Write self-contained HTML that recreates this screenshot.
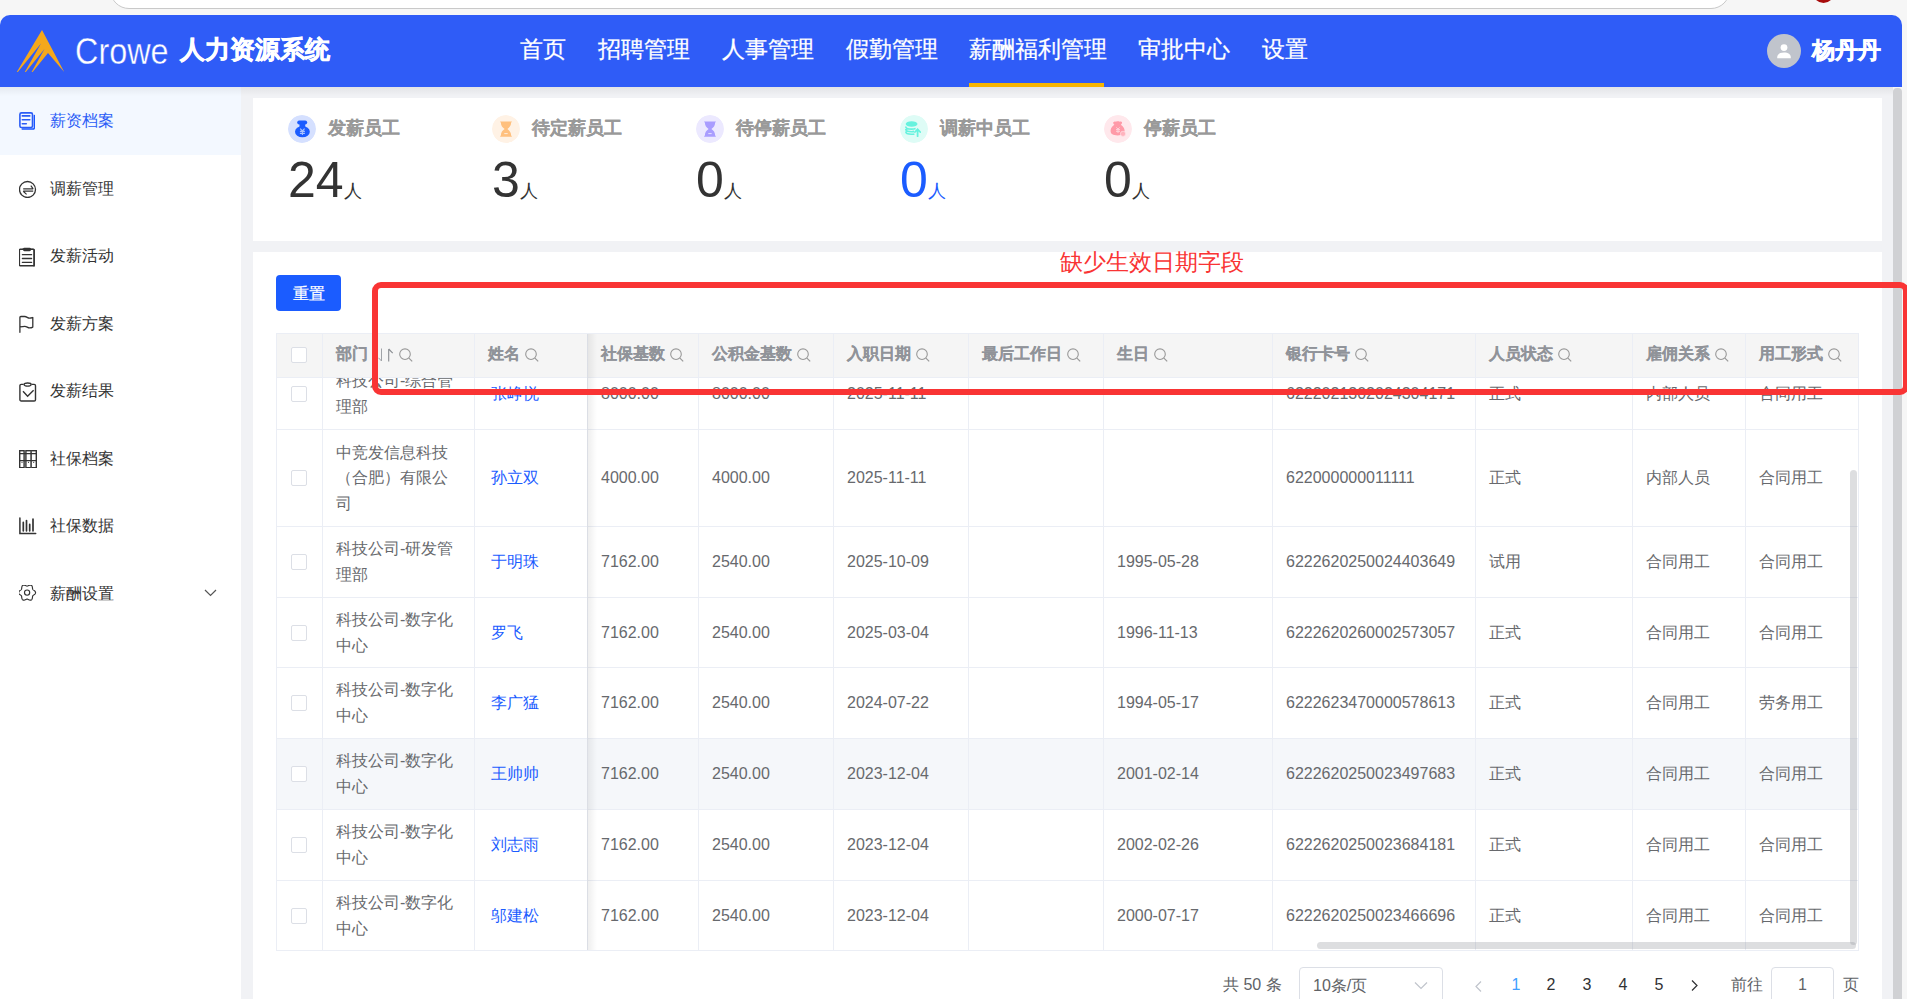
<!DOCTYPE html>
<html><head><meta charset="utf-8">
<style>
*{box-sizing:border-box;margin:0;padding:0}
html,body{width:1907px;height:999px;overflow:hidden;background:#f6f6f6;font-family:"Liberation Sans",sans-serif}
.abs{position:absolute}
#root{position:relative;width:1907px;height:999px;overflow:hidden}
#search{position:absolute;left:110px;top:-30px;width:1620px;height:39px;background:#fff;border:1.5px solid #c9c9c9;border-radius:19px}
#redav{position:absolute;left:1813px;top:-17px;width:21px;height:20px;border-radius:50%;background:#a80c0c}
#hdr{position:absolute;left:0;top:15px;width:1902px;height:72px;background:#2f5cf7;border-radius:10px 10px 0 0}
#hdr .nav{position:absolute;top:-1px;height:72px;line-height:70px;color:#fff;font-size:22.7px;white-space:nowrap;-webkit-text-stroke:0.25px #fff}
#hdr .act{position:absolute;left:969px;top:68px;width:135px;height:4px;background:#f7b500}
#side{position:absolute;left:0;top:87px;width:241px;height:912px;background:#fff}
#content{position:absolute;left:241px;top:87px;width:1652px;height:912px;background:#f1f2f5}
#shadow{position:absolute;left:0;top:87px;width:1893px;height:9px;background:linear-gradient(rgba(0,0,0,0.06),rgba(0,0,0,0))}
#vscroll{position:absolute;left:1893px;top:88px;width:9px;height:911px;background:#d0d1d4;border-radius:4px 4px 0 0}
.mi{position:absolute;left:0;width:241px;height:68px;color:#333;font-size:16px}
.mi span{position:absolute;left:50px;top:0;line-height:68px}
.mi svg{position:absolute;left:19px;top:25px}
.card{position:absolute;background:#fff}
.st{position:absolute;top:98px;height:143px}
.st .ic{position:absolute;left:0;top:16.5px;width:28px;height:28px;border-radius:50%}
.st .lb{position:absolute;left:40px;top:16px;line-height:28px;font-size:18px;font-weight:bold;color:#999;white-space:nowrap;-webkit-text-stroke:0.15px #999}
.st .num{position:absolute;left:0;top:52px;font-size:50px;line-height:60px;color:#333;white-space:nowrap}
.st .num small{font-size:18px;margin-left:0px}

</style></head><body><div id="root">
<div id="search"></div>
<div id="redav"></div>
<div id="hdr">
  <svg class="abs" style="left:0;top:0" width="70" height="72" viewBox="0 15 70 72"><path d="M42 30 L64.2 72 L48 53 L32.6 72 L31.6 72 L44.5 48.9 L25.8 72 L24.8 72 L41 43.4 L17.8 72 L16.8 72 Z" fill="#f5a81c"/></svg>
  <div class="nav" style="left:75px;top:1px;font-size:37px;font-weight:normal;line-height:72px;transform:scaleX(0.875);transform-origin:0 0;-webkit-text-stroke:0.4px #2f5cf7">Crowe</div>
  <div class="nav" style="left:180px;font-size:25px;font-weight:bold;-webkit-text-stroke:0.6px #fff">人力资源系统</div>
  <div class="nav" style="left:520px">首页</div>
  <div class="nav" style="left:598px">招聘管理</div>
  <div class="nav" style="left:722px">人事管理</div>
  <div class="nav" style="left:846px">假勤管理</div>
  <div class="nav" style="left:969px">薪酬福利管理</div>
  <div class="nav" style="left:1138px">审批中心</div>
  <div class="nav" style="left:1262px">设置</div>
  <div class="act"></div>
  <svg class="abs" style="left:1767px;top:19px" width="34" height="34" viewBox="0 0 34 34"><circle cx="17" cy="17" r="17" fill="#c0c4cc"/><circle cx="17" cy="13.6" r="3.4" fill="#fff"/><path d="M10.2 23.6c0-3.2 2.6-5 6.8-5s6.8 1.8 6.8 5v.6H10.2z" fill="#fff"/></svg>
  <div class="nav" style="left:1812px;top:0px;font-weight:bold;-webkit-text-stroke:0.6px #fff">杨丹丹</div>
</div>
<div id="side"></div>
<div id="content"></div>
<div class="mi" style="top:87px;background:#f3f8ff;color:#2a5cf6"><svg width="16" height="18" viewBox="0 0 16 18"><rect x="0.9" y="0.9" width="12.6" height="14.6" rx="1.6" fill="none" stroke="#2a5cf6" stroke-width="1.6"/><path d="M3.3 3.9h7.5M3.3 7.8h7.5M3.3 11.7h4" stroke="#2a5cf6" stroke-width="1.6" stroke-linecap="round"/><path d="M15.4 3.6v12.2a1.2 1.2 0 0 1-1.2 1.2H3.2" fill="none" stroke="#1a55ff" stroke-width="1.5" stroke-linecap="round"/></svg><span>薪资档案</span></div>
<div class="mi" style="top:155px"><svg width="18" height="18" viewBox="0 0 18 18"><circle cx="8.5" cy="9.5" r="8" fill="none" stroke="#333" stroke-width="1.3"/><path d="M4.2 8.9h10M4.2 11.2h10M11.8 5.6l2.4 3.2M4.2 11.2l3.4 3.2" fill="none" stroke="#333" stroke-width="1.2"/></svg><span>调薪管理</span></div>
<div class="mi" style="top:222px"><svg width="18" height="20" viewBox="0 0 18 20"><path d="M3 2.4h3.4M10.5 2.4h3.6a1 1 0 0 1 1 1v16" fill="none" stroke="#333" stroke-width="1.4"/><rect x="0.4" y="2.2" width="14.8" height="16.6" rx="0.8" fill="none" stroke="#333" stroke-width="1.4"/><rect x="4.6" y="1.4" width="6.8" height="2.2" rx="0.8" fill="none" stroke="#333" stroke-width="1.2"/><path d="M3.4 7.7h9.2M3.4 11.5h9.2M3.4 15.4h9.2" stroke="#333" stroke-width="1.3" stroke-linecap="round"/></svg><span>发薪活动</span></div>
<div class="mi" style="top:290px"><svg width="18" height="18" viewBox="0 0 18 18"><path d="M0.9 17.3V2.5a1 1 0 0 1 1-1h3.8c2.2 0 2.8 1.6 4.9 1.6 1.5 0 2.5-.4 3.2-.6v9.6c-.7.4-1.7.8-3.2.8-2.1 0-2.7-1.6-4.9-1.6-1.4 0-3.1.3-4.8.6" fill="none" stroke="#333" stroke-width="1.3" stroke-linejoin="round" stroke-linecap="round"/></svg><span>发薪方案</span></div>
<div class="mi" style="top:357px"><svg width="18" height="20" viewBox="0 0 18 20"><path d="M4.6 2.4H2.2A1.3 1.3 0 0 0 .9 3.7v14a1.3 1.3 0 0 0 1.3 1.3h13a1.3 1.3 0 0 0 1.3-1.3v-14a1.3 1.3 0 0 0-1.3-1.3h-2.5" fill="none" stroke="#333" stroke-width="1.4"/><ellipse cx="8.6" cy="2.6" rx="3.6" ry="1.6" fill="none" stroke="#333" stroke-width="1.3"/><path d="M4 9.3l4.6 5 6-6" fill="none" stroke="#333" stroke-width="1.4"/></svg><span>发薪结果</span></div>
<div class="mi" style="top:425px"><svg width="18" height="18" viewBox="0 0 18 18"><rect x="0.7" y="0.7" width="4.4" height="17" fill="none" stroke="#333" stroke-width="1.4"/><rect x="6.9" y="0.7" width="10.4" height="17" fill="none" stroke="#333" stroke-width="1.4"/><path d="M12.1 0.7v17" stroke="#555" stroke-width="1.8"/><path d="M0.7 3.6h16.6M0.7 10.6h16.6" stroke="#333" stroke-width="1.3"/><circle cx="3" cy="12.3" r=".6" fill="#333"/><circle cx="9.5" cy="12.3" r=".6" fill="#333"/><circle cx="14.7" cy="12.3" r=".6" fill="#333"/></svg><span>社保档案</span></div>
<div class="mi" style="top:492px"><svg width="18" height="18" viewBox="0 0 18 18"><path d="M.9 1v15.6h15.8" fill="none" stroke="#333" stroke-width="1.5" stroke-linecap="round"/><path d="M4.3 5.4v8.4M7.5 3.6v10.2M10.7 7.4v6.4M14 2.2v11.6" stroke="#333" stroke-width="1.7" stroke-linecap="round"/></svg><span>社保数据</span></div>
<div class="mi" style="top:560px"><svg width="18" height="18" viewBox="0 0 18 18"><path d="M16.55 7.60 L16.49 8.04 L16.32 8.46 L16.06 8.86 L15.72 9.22 L15.34 9.54 L14.95 9.83 L14.58 10.09 L14.25 10.34 L13.98 10.59 L13.77 10.88 L13.63 11.19 L13.55 11.56 L13.49 11.97 L13.46 12.42 L13.40 12.90 L13.31 13.39 L13.17 13.86 L12.96 14.29 L12.68 14.65 L12.32 14.92 L11.92 15.09 L11.46 15.15 L10.99 15.12 L10.51 15.01 L10.04 14.84 L9.60 14.65 L9.19 14.46 L8.80 14.29 L8.45 14.19 L8.10 14.15 L7.75 14.19 L7.40 14.29 L7.01 14.46 L6.60 14.65 L6.16 14.84 L5.69 15.01 L5.21 15.12 L4.74 15.15 L4.28 15.09 L3.88 14.92 L3.52 14.65 L3.24 14.29 L3.03 13.86 L2.89 13.39 L2.80 12.90 L2.74 12.42 L2.71 11.97 L2.65 11.56 L2.57 11.19 L2.43 10.88 L2.22 10.59 L1.95 10.34 L1.62 10.09 L1.25 9.83 L0.86 9.54 L0.48 9.22 L0.14 8.86 L-0.12 8.46 L-0.29 8.04 L-0.35 7.60 L-0.29 7.16 L-0.12 6.74 L0.14 6.34 L0.48 5.98 L0.86 5.66 L1.25 5.37 L1.62 5.11 L1.95 4.86 L2.22 4.61 L2.43 4.33 L2.57 4.01 L2.65 3.64 L2.71 3.23 L2.74 2.78 L2.80 2.30 L2.89 1.81 L3.03 1.34 L3.24 0.91 L3.52 0.55 L3.87 0.28 L4.28 0.11 L4.74 0.05 L5.21 0.08 L5.69 0.19 L6.16 0.36 L6.60 0.55 L7.01 0.74 L7.40 0.91 L7.75 1.01 L8.10 1.05 L8.45 1.01 L8.80 0.91 L9.19 0.74 L9.60 0.55 L10.04 0.36 L10.51 0.19 L10.99 0.08 L11.46 0.05 L11.92 0.11 L12.32 0.28 L12.68 0.55 L12.96 0.91 L13.17 1.34 L13.31 1.81 L13.40 2.30 L13.46 2.78 L13.49 3.23 L13.55 3.64 L13.63 4.01 L13.77 4.33 L13.98 4.61 L14.25 4.86 L14.58 5.11 L14.95 5.37 L15.34 5.66 L15.72 5.98 L16.06 6.34 L16.32 6.74 L16.49 7.16Z" fill="none" stroke="#333" stroke-width="1.15"/><circle cx="8.1" cy="7.6" r="2.6" fill="none" stroke="#333" stroke-width="1.15"/></svg><span>薪酬设置</span><svg style="left:204px;top:29px" width="13" height="8" viewBox="0 0 13 8"><path d="M1 1l5.5 5.5L12 1" fill="none" stroke="#555" stroke-width="1.2"/></svg></div>

<div id="shadow"></div>
<div id="vscroll"></div>
<div class="card" style="left:253px;top:98px;width:1629px;height:143px"></div>

<div class="st" style="left:288px"><svg class="ic" width="28" height="28" viewBox="0 0 28 28"><circle cx="14" cy="14" r="14" fill="#d5e0ff"/><rect x="9.2" y="5.5" width="10" height="3.9" rx="1.95" fill="#1b5cff"/><rect x="11.5" y="8.5" width="5.7" height="3.5" fill="#1b5cff"/><ellipse cx="14.4" cy="16.7" rx="7.4" ry="5.6" fill="#1b5cff"/><path d="M12.2 13.6l2.2 2.3 2.2-2.3M11.9 16.4h5M11.9 18.4h5M14.4 15.9v4" stroke="#a9c2ff" stroke-width="1.1" fill="none"/></svg><div class="lb">发薪员工</div><div class="num">24<small>人</small></div></div>
<div class="st" style="left:492px"><svg class="ic" width="28" height="28" viewBox="0 0 28 28"><circle cx="14" cy="14" r="14" fill="#fff2e5"/><path d="M8 6.4h12l-.9 1.4c0 3-1.6 4.6-3.7 6.2 2.1 1.6 3.7 3.2 3.7 6.2l.9 1.6H8l.9-1.6c0-3 1.6-4.6 3.7-6.2-2.1-1.6-3.7-3.2-3.7-6.2z" fill="#ffc07e"/><path d="M12.3 18.6h3.4" stroke="#fff2e5" stroke-width=".9"/></svg><div class="lb">待定薪员工</div><div class="num">3<small>人</small></div></div>
<div class="st" style="left:696px"><svg class="ic" width="28" height="28" viewBox="0 0 28 28"><circle cx="14" cy="14" r="14" fill="#ece9ff"/><path d="M8 6.4h12l-.9 1.4c0 3-1.6 4.6-3.7 6.2 2.1 1.6 3.7 3.2 3.7 6.2l.9 1.6H8l.9-1.6c0-3 1.6-4.6 3.7-6.2-2.1-1.6-3.7-3.2-3.7-6.2z" fill="#a99dff"/><path d="M12.3 18.6h3.4" stroke="#ece9ff" stroke-width=".9"/></svg><div class="lb">待停薪员工</div><div class="num">0<small>人</small></div></div>
<div class="st" style="left:900px"><svg class="ic" width="28" height="28" viewBox="0 0 28 28"><circle cx="14" cy="14" r="14" fill="#defcf6"/><ellipse cx="11.6" cy="9" rx="5.9" ry="2.8" fill="#66f2de"/><path d="M5.7 11.4c0 1.5 2.6 2.7 5.9 2.7 1.6 0 3-.3 4-.7M5.7 14c0 1.5 2.6 2.7 5.9 2.7.9 0 1.8-.1 2.6-.3M5.7 16.6c0 1.5 2.6 2.7 5.9 2.7 1 0 2-.1 2.8-.4" stroke="#66f2de" stroke-width="1.6" fill="none"/><path d="M17.6 21.2v-5.6M15 17l2.6-2.8 2.6 2.8" stroke="#66f2de" stroke-width="1.8" fill="none" stroke-linecap="round"/></svg><div class="lb">调薪中员工</div><div class="num" style="color:#1b5cff">0<small>人</small></div></div>
<div class="st" style="left:1104px"><svg class="ic" width="28" height="28" viewBox="0 0 28 28"><circle cx="14" cy="14" r="14" fill="#ffe8ec"/><path d="M9.6 7.2c.3-1 1.6-.9 2.4-.5.8-.6 2.8-.6 3.6 0 .8-.4 2.1-.5 2.4.5.3.9-.4 1.7-1.2 2.5 2.4 1.4 3.8 3.6 3.8 6.1 0 3.4-2.4 4.6-7 4.6s-7-1.2-7-4.6c0-2.5 1.4-4.7 3.8-6.1-.8-.8-1.5-1.6-1.2-2.5z" fill="#ff9aa8"/><path d="M12.4 12.4l1.6 1.7 1.6-1.7M12 14.6h4M12 16.3h4M14 14.1v4" stroke="#ffd3da" stroke-width="1" fill="none"/><circle cx="19" cy="18.8" r="2.6" fill="#ffb3be" stroke="#ffe8ec" stroke-width="0.6"/></svg><div class="lb">停薪员工</div><div class="num">0<small>人</small></div></div>
<div class="card" style="left:253px;top:252px;width:1629px;height:747px"></div>
<!--T0-->
<style>.tb{position:absolute;left:276px;top:333px;width:1583px;height:618px;border:1px solid #ebeef5;overflow:hidden;background:#fff}.th{position:absolute;top:0;height:44px;background:#f5f5f5;border-right:1px solid #ebeef5;border-bottom:1px solid #ebeef5}.th span{position:absolute;left:13px;top:-2px;line-height:44px;font-size:16px;font-weight:bold;color:#909399;white-space:nowrap;-webkit-text-stroke:0.15px #909399}.th .si{position:relative;top:2.5px;margin-left:5px}.th .so{position:relative;top:2.5px;margin-left:10px}.td{position:absolute;border-right:1px solid #ebeef5;border-top:1px solid #ebeef5;font-size:16px;color:#67696d;display:flex;align-items:center}.td span{padding-left:13px;line-height:25.6px;display:block}.cb{position:absolute;left:14px;width:16px;height:16px;border:1px solid #dcdfe6;border-radius:2px;background:#fff}</style>
<div class="tb">
<div class="td" style="left:0px;top:24px;width:46px;height:71px;background:#fff"><div class="cb" style="top:27px"></div></div>
<div class="td" style="left:46px;top:24px;width:152px;height:71px;background:#fff"><span style="width:152px;padding-right:12px">科技公司-综合管理部</span></div>
<div class="td" style="left:198px;top:24px;width:113px;height:71px;background:#fff"><span style="color:#1b5cff;padding-left:16px">张峥悦</span></div>
<div class="td" style="left:311px;top:24px;width:111px;height:71px;background:#fff"><span>8000.00</span></div>
<div class="td" style="left:422px;top:24px;width:135px;height:71px;background:#fff"><span>8000.00</span></div>
<div class="td" style="left:557px;top:24px;width:135px;height:71px;background:#fff"><span>2025-11-11</span></div>
<div class="td" style="left:692px;top:24px;width:135px;height:71px;background:#fff"><span></span></div>
<div class="td" style="left:827px;top:24px;width:169px;height:71px;background:#fff"><span></span></div>
<div class="td" style="left:996px;top:24px;width:203px;height:71px;background:#fff"><span>6222021302024304171</span></div>
<div class="td" style="left:1199px;top:24px;width:157px;height:71px;background:#fff"><span>正式</span></div>
<div class="td" style="left:1356px;top:24px;width:113px;height:71px;background:#fff"><span>内部人员</span></div>
<div class="td" style="left:1469px;top:24px;width:113px;height:71px;background:#fff"><span>合同用工</span></div>
<div class="td" style="left:0px;top:95px;width:46px;height:97px;background:#fff"><div class="cb" style="top:40px"></div></div>
<div class="td" style="left:46px;top:95px;width:152px;height:97px;background:#fff"><span style="width:152px;padding-right:12px">中竞发信息科技（合肥）有限公司</span></div>
<div class="td" style="left:198px;top:95px;width:113px;height:97px;background:#fff"><span style="color:#1b5cff;padding-left:16px">孙立双</span></div>
<div class="td" style="left:311px;top:95px;width:111px;height:97px;background:#fff"><span>4000.00</span></div>
<div class="td" style="left:422px;top:95px;width:135px;height:97px;background:#fff"><span>4000.00</span></div>
<div class="td" style="left:557px;top:95px;width:135px;height:97px;background:#fff"><span>2025-11-11</span></div>
<div class="td" style="left:692px;top:95px;width:135px;height:97px;background:#fff"><span></span></div>
<div class="td" style="left:827px;top:95px;width:169px;height:97px;background:#fff"><span></span></div>
<div class="td" style="left:996px;top:95px;width:203px;height:97px;background:#fff"><span>622000000011111</span></div>
<div class="td" style="left:1199px;top:95px;width:157px;height:97px;background:#fff"><span>正式</span></div>
<div class="td" style="left:1356px;top:95px;width:113px;height:97px;background:#fff"><span>内部人员</span></div>
<div class="td" style="left:1469px;top:95px;width:113px;height:97px;background:#fff"><span>合同用工</span></div>
<div class="td" style="left:0px;top:192px;width:46px;height:71px;background:#fff"><div class="cb" style="top:27px"></div></div>
<div class="td" style="left:46px;top:192px;width:152px;height:71px;background:#fff"><span style="width:152px;padding-right:12px">科技公司-研发管理部</span></div>
<div class="td" style="left:198px;top:192px;width:113px;height:71px;background:#fff"><span style="color:#1b5cff;padding-left:16px">于明珠</span></div>
<div class="td" style="left:311px;top:192px;width:111px;height:71px;background:#fff"><span>7162.00</span></div>
<div class="td" style="left:422px;top:192px;width:135px;height:71px;background:#fff"><span>2540.00</span></div>
<div class="td" style="left:557px;top:192px;width:135px;height:71px;background:#fff"><span>2025-10-09</span></div>
<div class="td" style="left:692px;top:192px;width:135px;height:71px;background:#fff"><span></span></div>
<div class="td" style="left:827px;top:192px;width:169px;height:71px;background:#fff"><span>1995-05-28</span></div>
<div class="td" style="left:996px;top:192px;width:203px;height:71px;background:#fff"><span>6222620250024403649</span></div>
<div class="td" style="left:1199px;top:192px;width:157px;height:71px;background:#fff"><span>试用</span></div>
<div class="td" style="left:1356px;top:192px;width:113px;height:71px;background:#fff"><span>合同用工</span></div>
<div class="td" style="left:1469px;top:192px;width:113px;height:71px;background:#fff"><span>合同用工</span></div>
<div class="td" style="left:0px;top:263px;width:46px;height:70px;background:#fff"><div class="cb" style="top:27px"></div></div>
<div class="td" style="left:46px;top:263px;width:152px;height:70px;background:#fff"><span style="width:152px;padding-right:12px">科技公司-数字化中心</span></div>
<div class="td" style="left:198px;top:263px;width:113px;height:70px;background:#fff"><span style="color:#1b5cff;padding-left:16px">罗飞</span></div>
<div class="td" style="left:311px;top:263px;width:111px;height:70px;background:#fff"><span>7162.00</span></div>
<div class="td" style="left:422px;top:263px;width:135px;height:70px;background:#fff"><span>2540.00</span></div>
<div class="td" style="left:557px;top:263px;width:135px;height:70px;background:#fff"><span>2025-03-04</span></div>
<div class="td" style="left:692px;top:263px;width:135px;height:70px;background:#fff"><span></span></div>
<div class="td" style="left:827px;top:263px;width:169px;height:70px;background:#fff"><span>1996-11-13</span></div>
<div class="td" style="left:996px;top:263px;width:203px;height:70px;background:#fff"><span>6222620260002573057</span></div>
<div class="td" style="left:1199px;top:263px;width:157px;height:70px;background:#fff"><span>正式</span></div>
<div class="td" style="left:1356px;top:263px;width:113px;height:70px;background:#fff"><span>合同用工</span></div>
<div class="td" style="left:1469px;top:263px;width:113px;height:70px;background:#fff"><span>合同用工</span></div>
<div class="td" style="left:0px;top:333px;width:46px;height:71px;background:#fff"><div class="cb" style="top:27px"></div></div>
<div class="td" style="left:46px;top:333px;width:152px;height:71px;background:#fff"><span style="width:152px;padding-right:12px">科技公司-数字化中心</span></div>
<div class="td" style="left:198px;top:333px;width:113px;height:71px;background:#fff"><span style="color:#1b5cff;padding-left:16px">李广猛</span></div>
<div class="td" style="left:311px;top:333px;width:111px;height:71px;background:#fff"><span>7162.00</span></div>
<div class="td" style="left:422px;top:333px;width:135px;height:71px;background:#fff"><span>2540.00</span></div>
<div class="td" style="left:557px;top:333px;width:135px;height:71px;background:#fff"><span>2024-07-22</span></div>
<div class="td" style="left:692px;top:333px;width:135px;height:71px;background:#fff"><span></span></div>
<div class="td" style="left:827px;top:333px;width:169px;height:71px;background:#fff"><span>1994-05-17</span></div>
<div class="td" style="left:996px;top:333px;width:203px;height:71px;background:#fff"><span>6222623470000578613</span></div>
<div class="td" style="left:1199px;top:333px;width:157px;height:71px;background:#fff"><span>正式</span></div>
<div class="td" style="left:1356px;top:333px;width:113px;height:71px;background:#fff"><span>合同用工</span></div>
<div class="td" style="left:1469px;top:333px;width:113px;height:71px;background:#fff"><span>劳务用工</span></div>
<div class="td" style="left:0px;top:404px;width:46px;height:71px;background:#f5f7fa"><div class="cb" style="top:27px"></div></div>
<div class="td" style="left:46px;top:404px;width:152px;height:71px;background:#f5f7fa"><span style="width:152px;padding-right:12px">科技公司-数字化中心</span></div>
<div class="td" style="left:198px;top:404px;width:113px;height:71px;background:#f5f7fa"><span style="color:#1b5cff;padding-left:16px">王帅帅</span></div>
<div class="td" style="left:311px;top:404px;width:111px;height:71px;background:#f5f7fa"><span>7162.00</span></div>
<div class="td" style="left:422px;top:404px;width:135px;height:71px;background:#f5f7fa"><span>2540.00</span></div>
<div class="td" style="left:557px;top:404px;width:135px;height:71px;background:#f5f7fa"><span>2023-12-04</span></div>
<div class="td" style="left:692px;top:404px;width:135px;height:71px;background:#f5f7fa"><span></span></div>
<div class="td" style="left:827px;top:404px;width:169px;height:71px;background:#f5f7fa"><span>2001-02-14</span></div>
<div class="td" style="left:996px;top:404px;width:203px;height:71px;background:#f5f7fa"><span>6222620250023497683</span></div>
<div class="td" style="left:1199px;top:404px;width:157px;height:71px;background:#f5f7fa"><span>正式</span></div>
<div class="td" style="left:1356px;top:404px;width:113px;height:71px;background:#f5f7fa"><span>合同用工</span></div>
<div class="td" style="left:1469px;top:404px;width:113px;height:71px;background:#f5f7fa"><span>合同用工</span></div>
<div class="td" style="left:0px;top:475px;width:46px;height:71px;background:#fff"><div class="cb" style="top:27px"></div></div>
<div class="td" style="left:46px;top:475px;width:152px;height:71px;background:#fff"><span style="width:152px;padding-right:12px">科技公司-数字化中心</span></div>
<div class="td" style="left:198px;top:475px;width:113px;height:71px;background:#fff"><span style="color:#1b5cff;padding-left:16px">刘志雨</span></div>
<div class="td" style="left:311px;top:475px;width:111px;height:71px;background:#fff"><span>7162.00</span></div>
<div class="td" style="left:422px;top:475px;width:135px;height:71px;background:#fff"><span>2540.00</span></div>
<div class="td" style="left:557px;top:475px;width:135px;height:71px;background:#fff"><span>2023-12-04</span></div>
<div class="td" style="left:692px;top:475px;width:135px;height:71px;background:#fff"><span></span></div>
<div class="td" style="left:827px;top:475px;width:169px;height:71px;background:#fff"><span>2002-02-26</span></div>
<div class="td" style="left:996px;top:475px;width:203px;height:71px;background:#fff"><span>6222620250023684181</span></div>
<div class="td" style="left:1199px;top:475px;width:157px;height:71px;background:#fff"><span>正式</span></div>
<div class="td" style="left:1356px;top:475px;width:113px;height:71px;background:#fff"><span>合同用工</span></div>
<div class="td" style="left:1469px;top:475px;width:113px;height:71px;background:#fff"><span>合同用工</span></div>
<div class="td" style="left:0px;top:546px;width:46px;height:70px;background:#fff"><div class="cb" style="top:27px"></div></div>
<div class="td" style="left:46px;top:546px;width:152px;height:70px;background:#fff"><span style="width:152px;padding-right:12px">科技公司-数字化中心</span></div>
<div class="td" style="left:198px;top:546px;width:113px;height:70px;background:#fff"><span style="color:#1b5cff;padding-left:16px">邬建松</span></div>
<div class="td" style="left:311px;top:546px;width:111px;height:70px;background:#fff"><span>7162.00</span></div>
<div class="td" style="left:422px;top:546px;width:135px;height:70px;background:#fff"><span>2540.00</span></div>
<div class="td" style="left:557px;top:546px;width:135px;height:70px;background:#fff"><span>2023-12-04</span></div>
<div class="td" style="left:692px;top:546px;width:135px;height:70px;background:#fff"><span></span></div>
<div class="td" style="left:827px;top:546px;width:169px;height:70px;background:#fff"><span>2000-07-17</span></div>
<div class="td" style="left:996px;top:546px;width:203px;height:70px;background:#fff"><span>6222620250023466696</span></div>
<div class="td" style="left:1199px;top:546px;width:157px;height:70px;background:#fff"><span>正式</span></div>
<div class="td" style="left:1356px;top:546px;width:113px;height:70px;background:#fff"><span>合同用工</span></div>
<div class="td" style="left:1469px;top:546px;width:113px;height:70px;background:#fff"><span>合同用工</span></div>
<div class="th" style="left:0px;width:46px"><div class="cb" style="top:13px"></div></div>
<div class="th" style="left:46px;width:152px"><span>部门<svg class="so" width="16" height="14" viewBox="0 0 16 14"><path d="M3.5 0.5v12.5M3.5 13l-3-3.2" fill="none" stroke="#a0a3a8" stroke-width="1"/><path d="M10.7 13.5V1M10.7 1l4 4.2" fill="none" stroke="#8a8d92" stroke-width="1.1"/></svg><svg class="si" width="14" height="14" viewBox="0 0 14 14"><circle cx="6" cy="6.2" r="5.3" fill="none" stroke="#999" stroke-width="1.1"/><path d="M9.9 10.1l3.3 3.3" stroke="#999" stroke-width="1.2"/></svg></span></div>
<div class="th" style="left:198px;width:113px"><span>姓名<svg class="si" width="14" height="14" viewBox="0 0 14 14"><circle cx="6" cy="6.2" r="5.3" fill="none" stroke="#999" stroke-width="1.1"/><path d="M9.9 10.1l3.3 3.3" stroke="#999" stroke-width="1.2"/></svg></span></div>
<div class="th" style="left:311px;width:111px"><span>社保基数<svg class="si" width="14" height="14" viewBox="0 0 14 14"><circle cx="6" cy="6.2" r="5.3" fill="none" stroke="#999" stroke-width="1.1"/><path d="M9.9 10.1l3.3 3.3" stroke="#999" stroke-width="1.2"/></svg></span></div>
<div class="th" style="left:422px;width:135px"><span>公积金基数<svg class="si" width="14" height="14" viewBox="0 0 14 14"><circle cx="6" cy="6.2" r="5.3" fill="none" stroke="#999" stroke-width="1.1"/><path d="M9.9 10.1l3.3 3.3" stroke="#999" stroke-width="1.2"/></svg></span></div>
<div class="th" style="left:557px;width:135px"><span>入职日期<svg class="si" width="14" height="14" viewBox="0 0 14 14"><circle cx="6" cy="6.2" r="5.3" fill="none" stroke="#999" stroke-width="1.1"/><path d="M9.9 10.1l3.3 3.3" stroke="#999" stroke-width="1.2"/></svg></span></div>
<div class="th" style="left:692px;width:135px"><span>最后工作日<svg class="si" width="14" height="14" viewBox="0 0 14 14"><circle cx="6" cy="6.2" r="5.3" fill="none" stroke="#999" stroke-width="1.1"/><path d="M9.9 10.1l3.3 3.3" stroke="#999" stroke-width="1.2"/></svg></span></div>
<div class="th" style="left:827px;width:169px"><span>生日<svg class="si" width="14" height="14" viewBox="0 0 14 14"><circle cx="6" cy="6.2" r="5.3" fill="none" stroke="#999" stroke-width="1.1"/><path d="M9.9 10.1l3.3 3.3" stroke="#999" stroke-width="1.2"/></svg></span></div>
<div class="th" style="left:996px;width:203px"><span>银行卡号<svg class="si" width="14" height="14" viewBox="0 0 14 14"><circle cx="6" cy="6.2" r="5.3" fill="none" stroke="#999" stroke-width="1.1"/><path d="M9.9 10.1l3.3 3.3" stroke="#999" stroke-width="1.2"/></svg></span></div>
<div class="th" style="left:1199px;width:157px"><span>人员状态<svg class="si" width="14" height="14" viewBox="0 0 14 14"><circle cx="6" cy="6.2" r="5.3" fill="none" stroke="#999" stroke-width="1.1"/><path d="M9.9 10.1l3.3 3.3" stroke="#999" stroke-width="1.2"/></svg></span></div>
<div class="th" style="left:1356px;width:113px"><span>雇佣关系<svg class="si" width="14" height="14" viewBox="0 0 14 14"><circle cx="6" cy="6.2" r="5.3" fill="none" stroke="#999" stroke-width="1.1"/><path d="M9.9 10.1l3.3 3.3" stroke="#999" stroke-width="1.2"/></svg></span></div>
<div class="th" style="left:1469px;width:113px"><span>用工形式<svg class="si" width="14" height="14" viewBox="0 0 14 14"><circle cx="6" cy="6.2" r="5.3" fill="none" stroke="#999" stroke-width="1.1"/><path d="M9.9 10.1l3.3 3.3" stroke="#999" stroke-width="1.2"/></svg></span></div>
<div style="position:absolute;left:310px;top:0;width:10px;height:618px;background:linear-gradient(90deg,rgba(0,0,0,0.07),rgba(0,0,0,0))"></div>
<div style="position:absolute;left:1573px;top:136px;width:7px;height:475px;border-radius:4px;background:rgba(144,147,153,0.3)"></div>
<div style="position:absolute;left:1040px;top:608px;width:539px;height:7px;border-radius:4px;background:rgba(144,147,153,0.3)"></div>
</div>
<!--T1-->

<!--X0-->
<div class="abs" style="left:276px;top:275px;width:65px;height:36px;border-radius:4px;background:#1b5cff;color:#fff;font-size:16px;line-height:38px;text-align:center;-webkit-text-stroke:0.2px #fff">重置</div>
<div class="abs" style="left:1223px;top:973px;font-size:16px;line-height:24px;color:#606266;white-space:nowrap">共 50 条</div>
<div class="abs" style="left:1299px;top:967px;width:144px;height:40px;border:1px solid #dcdfe6;border-radius:4px;background:#fff"></div>
<div class="abs" style="left:1313px;top:974px;font-size:16px;line-height:24px;color:#606266;white-space:nowrap">10条/页</div>
<svg class="abs" style="left:1414px;top:981px" width="14" height="9" viewBox="0 0 14 9"><path d="M1 1.5l6 6 6-6" fill="none" stroke="#c0c4cc" stroke-width="1.2"/></svg>
<svg class="abs" style="left:1474px;top:980px" width="9" height="13" viewBox="0 0 9 13"><path d="M7 1.5l-5 5 5 5" fill="none" stroke="#c0c4cc" stroke-width="1.2"/></svg>
<div class="abs" style="left:1501px;top:973px;width:30px;font-size:16px;line-height:24px;color:#409eff;text-align:center">1</div>
<div class="abs" style="left:1536px;top:973px;width:30px;font-size:16px;line-height:24px;color:#303133;text-align:center">2</div>
<div class="abs" style="left:1572px;top:973px;width:30px;font-size:16px;line-height:24px;color:#303133;text-align:center">3</div>
<div class="abs" style="left:1608px;top:973px;width:30px;font-size:16px;line-height:24px;color:#303133;text-align:center">4</div>
<div class="abs" style="left:1644px;top:973px;width:30px;font-size:16px;line-height:24px;color:#303133;text-align:center">5</div>
<svg class="abs" style="left:1690px;top:979px" width="9" height="13" viewBox="0 0 9 13"><path d="M2 1.5l5 5-5 5" fill="none" stroke="#303133" stroke-width="1.2"/></svg>
<div class="abs" style="left:1731px;top:973px;font-size:16px;line-height:24px;color:#606266;white-space:nowrap">前往</div>
<div class="abs" style="left:1771px;top:967px;width:63px;height:40px;border:1px solid #dcdfe6;border-radius:4px;background:#fff"></div>
<div class="abs" style="left:1771px;top:973px;width:63px;font-size:16px;line-height:24px;color:#606266;text-align:center">1</div>
<div class="abs" style="left:1843px;top:973px;font-size:16px;line-height:24px;color:#606266;white-space:nowrap">页</div>
<div class="abs" style="left:372px;top:282px;width:1537px;height:112.5px;border:6px solid #f93434;border-radius:9px"></div>
<div class="abs" style="left:1060px;top:247px;font-size:23px;line-height:30px;color:#f93434;white-space:nowrap">缺少生效日期字段</div>
<!--X1-->
</div></body></html>
